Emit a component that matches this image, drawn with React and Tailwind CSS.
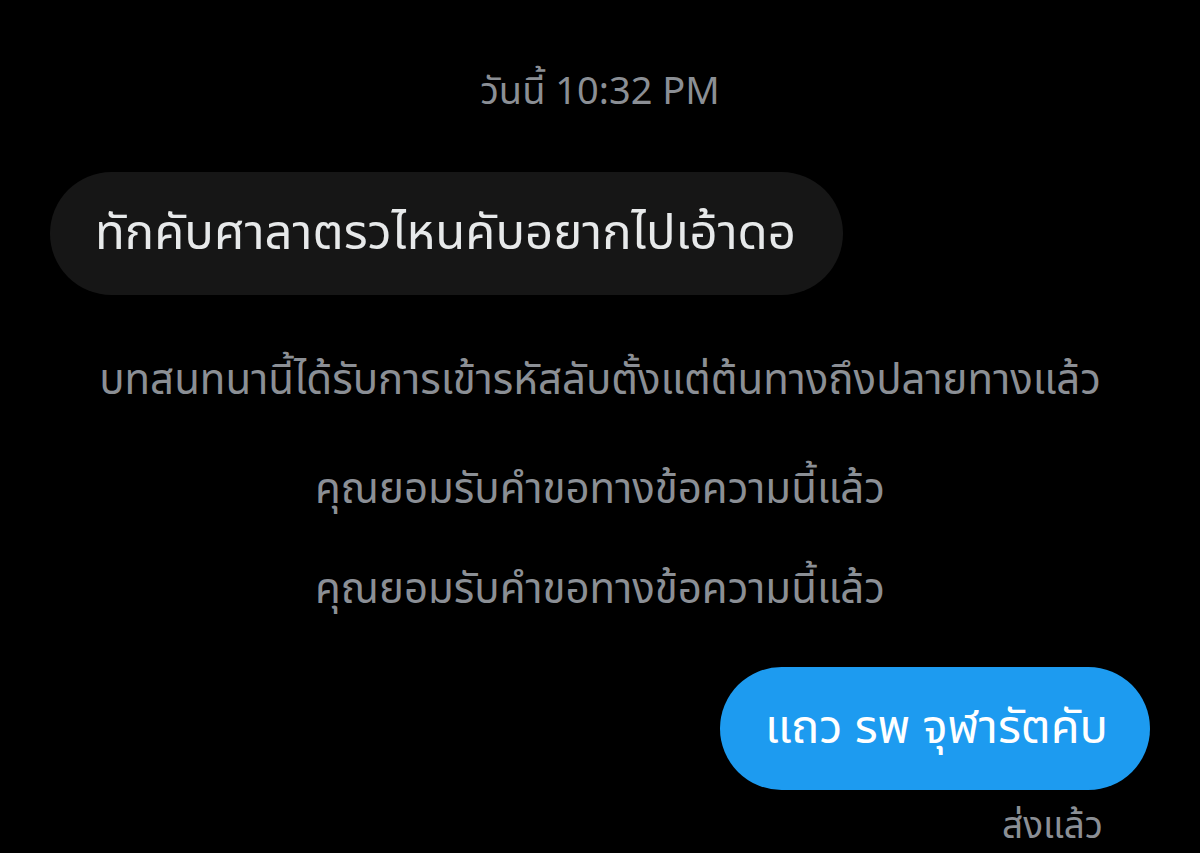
export default function App() {
  const font = { fontFamily: '"Noto Sans Thai", "Noto Sans Thai UI", "Noto Sans", "DejaVu Sans", sans-serif' };
  return (
    <div className="w-[1200px] h-[853px] bg-black overflow-hidden flex flex-col" style={font}>
      <div className="pt-[70px] text-center text-[38px] leading-[46px] text-[#8b8f95]">วันนี้ 10:32 PM</div>
      <div className="pl-[50px] mt-[56px]">
        <div className="flex items-center h-[123px] w-[793px] rounded-[62px] bg-[#161616] pl-[45px] text-[49px] leading-[60px] text-[#e7e9ea] whitespace-nowrap">
          ทักคับศาลาตรวไหนคับอยากไปเอ้าดอ
        </div>
      </div>
      <div className="flex flex-col items-center text-[42px] text-[#8b8f95] leading-[50px] whitespace-nowrap">
        <div className="mt-[61px]">บทสนทนานี้ได้รับการเข้ารหัสลับตั้งแต่ต้นทางถึงปลายทางแล้ว</div>
        <div className="mt-[59px]">คุณยอมรับคำขอทางข้อความนี้แล้ว</div>
        <div className="mt-[50px]">คุณยอมรับคำขอทางข้อความนี้แล้ว</div>
      </div>
      <div className="flex justify-end pr-[50px] mt-[52px]">
        <div className="flex items-center h-[123px] w-[430px] rounded-[62px] bg-[#1d9bf0] pl-[45px] text-[47px] leading-[60px] text-white whitespace-nowrap">
          แถว รพ จุฬารัตคับ
        </div>
      </div>
      <div className="flex justify-end pr-[97px] mt-[18px] text-[37px] leading-[38px] text-[#8b8f95]">ส่งแล้ว</div>
    </div>
  );
}
